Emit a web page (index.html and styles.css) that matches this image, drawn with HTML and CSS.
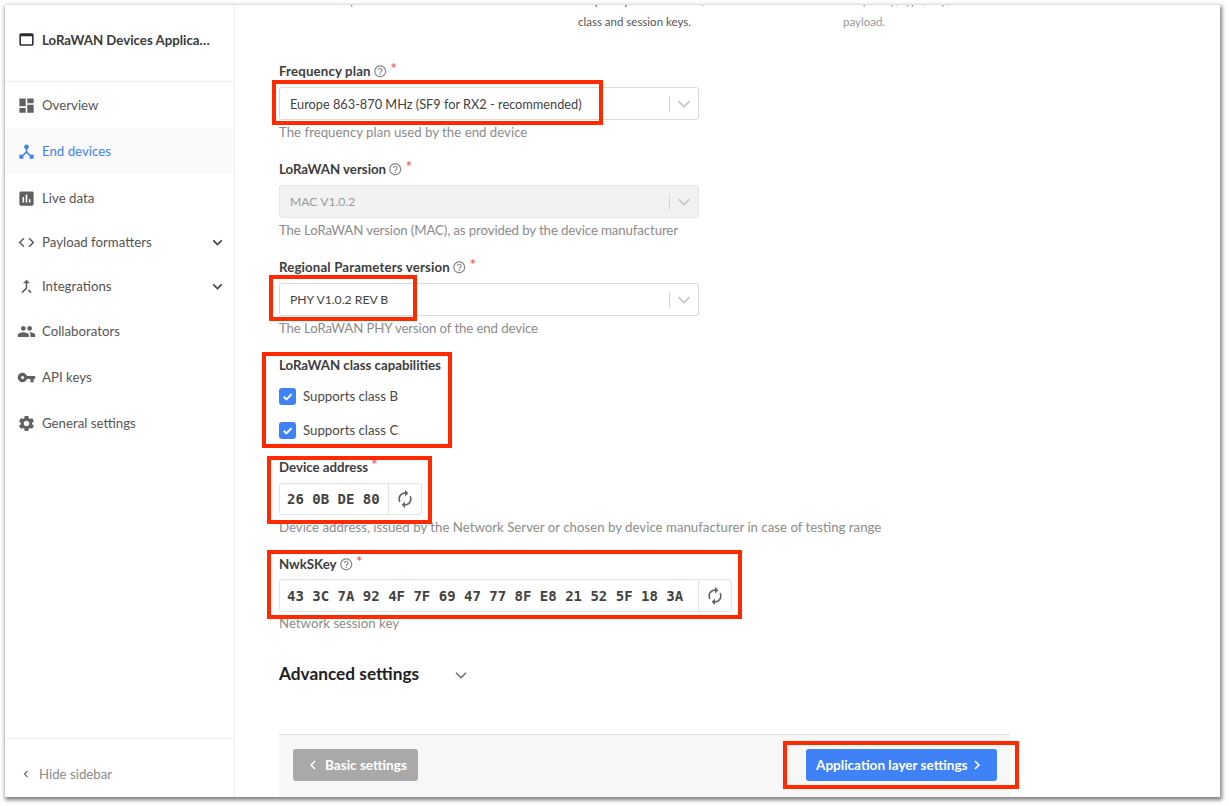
FILE: index.html
```html
<!DOCTYPE html>
<html lang="en">
<head>
<meta charset="utf-8">
<title>End devices</title>
<link rel="stylesheet" href="styles.css">
</head>
<body>
<svg class="defs" width="0" height="0" aria-hidden="true">
  <symbol id="i-web" viewBox="0 0 24 24"><path d="M19 4H5c-1.11 0-2 .9-2 2v12c0 1.1.89 2 2 2h14c1.1 0 2-.9 2-2V6c0-1.1-.89-2-2-2zm0 14H5V8h14v10z"/></symbol>
  <symbol id="i-dash" viewBox="0 0 24 24"><path d="M3 13h8V3H3v10zm0 8h8v-6H3v6zm10 0h8V11h-8v10zm0-18v6h8V3h-8z"/></symbol>
  <symbol id="i-hub" viewBox="0 0 24 24"><path d="M17 16l-4-4V8.82C14.16 8.4 15 7.3 15 6c0-1.66-1.34-3-3-3S9 4.34 9 6c0 1.3.84 2.4 2 2.82V12l-4 4H3v5h5v-3.05l4-4.2 4 4.2V21h5v-5h-4z"/></symbol>
  <symbol id="i-chart" viewBox="0 0 24 24"><path d="M19 3H5c-1.1 0-2 .9-2 2v14c0 1.1.9 2 2 2h14c1.1 0 2-.9 2-2V5c0-1.1-.9-2-2-2zM9 17H7v-7h2v7zm4 0h-2V7h2v10zm4 0h-2v-4h2v4z"/></symbol>
  <symbol id="i-code" viewBox="0 0 24 24"><path d="M9.4 16.6L4.8 12l4.6-4.6L8 6l-6 6 6 6 1.4-1.4zm5.2 0l4.6-4.6-4.6-4.6L16 6l6 6-6 6-1.4-1.4z"/></symbol>
  <symbol id="i-merge" viewBox="0 0 24 24"><path d="M17 20.41L18.41 19 15 15.59 13.59 17 17 20.41zM7.5 8H11v5.59L5.59 19 7 20.41l6-6V8h3.5L12 3.5 7.5 8z"/></symbol>
  <symbol id="i-people" viewBox="0 0 24 24"><path d="M16 11c1.66 0 2.99-1.34 2.99-3S17.66 5 16 5c-1.66 0-3 1.34-3 3s1.34 3 3 3zm-8 0c1.66 0 2.99-1.34 2.99-3S9.66 5 8 5C6.34 5 5 6.34 5 8s1.34 3 3 3zm0 2c-2.33 0-7 1.17-7 3.5V19h14v-2.5c0-2.33-4.67-3.5-7-3.5zm8 0c-.29 0-.62.02-.97.05 1.16.84 1.97 1.97 1.97 3.45V19h6v-2.5c0-2.33-4.67-3.5-7-3.5z"/></symbol>
  <symbol id="i-key" viewBox="0 0 24 24"><path d="M12.65 10C11.83 7.67 9.61 6 7 6c-3.31 0-6 2.69-6 6s2.69 6 6 6c2.61 0 4.83-1.67 5.65-4H17v4h4v-4h2v-4H12.65zM7 14c-1.1 0-2-.9-2-2s.9-2 2-2 2 .9 2 2-.9 2-2 2z"/></symbol>
  <symbol id="i-gear" viewBox="0 0 24 24"><path d="M19.14 12.94c.04-.3.06-.61.06-.94 0-.32-.02-.64-.07-.94l2.03-1.58c.18-.14.23-.41.12-.61l-1.92-3.32c-.12-.22-.37-.29-.59-.22l-2.39.96c-.5-.38-1.03-.7-1.62-.94l-.36-2.54c-.04-.24-.24-.41-.48-.41h-3.84c-.24 0-.43.17-.47.41l-.36 2.54c-.59.24-1.13.57-1.62.94l-2.39-.96c-.22-.08-.47 0-.59.22L2.74 8.87c-.12.21-.08.47.12.61l2.03 1.58c-.05.3-.09.63-.09.94s.02.64.07.94l-2.03 1.58c-.18.14-.23.41-.12.61l1.92 3.32c.12.22.37.29.59.22l2.39-.96c.5.38 1.03.7 1.62.94l.36 2.54c.05.24.24.41.48.41h3.84c.24 0 .44-.17.47-.41l.36-2.54c.59-.24 1.13-.56 1.62-.94l2.39.96c.22.08.47 0 .59-.22l1.92-3.32c.12-.22.07-.47-.12-.61l-2.01-1.58zM12 15.6c-1.98 0-3.6-1.62-3.6-3.6s1.62-3.6 3.6-3.6 3.6 1.62 3.6 3.6-1.62 3.6-3.6 3.6z"/></symbol>
  <symbol id="i-help" viewBox="0 0 24 24"><path d="M11 18h2v-2h-2v2zm1-16C6.48 2 2 6.48 2 12s4.48 10 10 10 10-4.48 10-10S17.52 2 12 2zm0 18c-4.41 0-8-3.59-8-8s3.59-8 8-8 8 3.59 8 8-3.59 8-8 8zm0-14c-2.21 0-4 1.79-4 4h2c0-1.1.9-2 2-2s2 .9 2 2c0 2-3 1.75-3 5h2c0-2.25 3-2.5 3-5 0-2.21-1.79-4-4-4z"/></symbol>
  <symbol id="i-renew" viewBox="0 0 24 24"><path d="M12 6v3l4-4-4-4v3c-4.42 0-8 3.58-8 8 0 1.57.46 3.03 1.24 4.26L6.7 14.8c-.45-.83-.7-1.79-.7-2.8 0-3.31 2.69-6 6-6zm6.76 1.74L17.3 9.2c.44.84.7 1.79.7 2.8 0 3.31-2.69 6-6 6v-3l-4 4 4 4v-3c4.42 0 8-3.58 8-8 0-1.57-.46-3.03-1.24-4.26z"/></symbol>
  <symbol id="i-down" viewBox="0 0 24 24"><path d="M7.41 8.59L12 13.17l4.59-4.58L18 10l-6 6-6-6z"/></symbol>
  <symbol id="i-down-thin" viewBox="0 0 24 24"><path d="M6.5 9.5L12 15l5.5-5.5" fill="none" stroke="currentColor" stroke-width="1.5"/></symbol>
  <symbol id="i-left" viewBox="0 0 24 24"><path d="M15.41 7.41L14 6l-6 6 6 6 1.41-1.41L10.83 12z"/></symbol>
  <symbol id="i-right" viewBox="0 0 24 24"><path d="M8.59 16.59L10 18l6-6-6-6-1.41 1.41L13.17 12z"/></symbol>
  <symbol id="i-check" viewBox="0 0 24 24"><path d="M5 12.5l5 5L19.5 7.5" fill="none" stroke="currentColor" stroke-width="3.4"/></symbol>
</svg>

<div class="window">
  <aside class="sidebar">
    <div class="app-head">
      <svg class="ico ico-head"><use href="#i-web"/></svg>
      <span class="app-name">LoRaWAN Devices Applica…</span>
    </div>
    <nav class="nav">
      <a class="nav-item"><svg class="ico"><use href="#i-dash"/></svg>Overview</a>
      <a class="nav-item is-active"><svg class="ico"><use href="#i-hub"/></svg>End devices</a>
      <a class="nav-item nav-live"><svg class="ico"><use href="#i-chart"/></svg>Live data</a>
      <a class="nav-item nav-sub"><svg class="ico"><use href="#i-code"/></svg>Payload formatters<svg class="ico nav-caret"><use href="#i-down"/></svg></a>
      <a class="nav-item nav-sub"><svg class="ico"><use href="#i-merge"/></svg>Integrations<svg class="ico nav-caret"><use href="#i-down"/></svg></a>
      <a class="nav-item"><svg class="ico"><use href="#i-people"/></svg>Collaborators</a>
      <a class="nav-item"><svg class="ico"><use href="#i-key"/></svg>API keys</a>
      <a class="nav-item"><svg class="ico"><use href="#i-gear"/></svg>General settings</a>
    </nav>
    <div class="side-foot"><svg class="ico ico-small"><use href="#i-left"/></svg>Hide sidebar</div>
  </aside>

  <main class="main">
    <div class="intro">
      <p class="intro-col">Uses pre-set</p>
      <p class="intro-col">Requires personalization, with<br>class and session keys.</p>
      <p class="intro-col intro-muted">Frequency, type, key, and<br>payload.</p>
    </div>

    <form class="form">
      <div class="field">
        <div class="label label-wide">Frequency plan<svg class="ico help"><use href="#i-help"/></svg><span class="req">*</span></div>
        <div class="select"><span class="select-value">Europe 863-870 MHz (SF9 for RX2 - recommended)</span><span class="select-sep"></span><svg class="ico select-caret"><use href="#i-down"/></svg></div>
        <div class="hint">The frequency plan used by the end device</div>
      </div>
      <div class="field">
        <div class="label">LoRaWAN version<svg class="ico help"><use href="#i-help"/></svg><span class="req">*</span></div>
        <div class="select is-disabled"><span class="select-value select-caps">MAC V1.0.2</span><span class="select-sep"></span><svg class="ico select-caret"><use href="#i-down"/></svg></div>
        <div class="hint hint-tight">The LoRaWAN version (MAC), as provided by the device manufacturer</div>
      </div>
      <div class="field">
        <div class="label label-wide">Regional Parameters version<svg class="ico help"><use href="#i-help"/></svg><span class="req">*</span></div>
        <div class="select"><span class="select-value select-caps">PHY V1.0.2 REV B</span><span class="select-sep"></span><svg class="ico select-caret"><use href="#i-down"/></svg></div>
        <div class="hint hint-tight">The LoRaWAN PHY version of the end device</div>
      </div>
      <div class="field-checks">
        <div class="label">LoRaWAN class capabilities</div>
        <div class="checks">
          <div class="check"><span class="box"><svg class="ico"><use href="#i-check"/></svg></span>Supports class B</div>
          <div class="check"><span class="box"><svg class="ico"><use href="#i-check"/></svg></span>Supports class C</div>
        </div>
      </div>
      <div class="field">
        <div class="label">Device address<span class="req">*</span></div>
        <div class="bytes bytes-short"><span class="bytes-value">26 0B DE 80</span><span class="bytes-btn"><svg class="ico"><use href="#i-renew"/></svg></span></div>
        <div class="hint">Device address, issued by the Network Server or chosen by device manufacturer in case of testing range</div>
      </div>
      <div class="field field-key">
        <div class="label">NwkSKey<svg class="ico help"><use href="#i-help"/></svg><span class="req">*</span></div>
        <div class="bytes bytes-long"><span class="bytes-value">43 3C 7A 92 4F 7F 69 47 77 8F E8 21 52 5F 18 3A</span><span class="bytes-btn"><svg class="ico"><use href="#i-renew"/></svg></span></div>
        <div class="hint">Network session key</div>
      </div>
      <div class="advanced"><span class="advanced-title">Advanced settings</span><svg class="ico advanced-caret"><use href="#i-down-thin"/></svg></div>
      <div class="actions">
        <button type="button" class="btn btn-muted"><svg class="ico"><use href="#i-left"/></svg>Basic settings</button>
        <button type="button" class="btn btn-primary">Application layer settings<svg class="ico"><use href="#i-right"/></svg></button>
      </div>
    </form>
  </main>

  <div class="mark mark-1"></div>
  <div class="mark mark-2"></div>
  <div class="mark mark-3"></div>
  <div class="mark mark-4"></div>
  <div class="mark mark-5"></div>
  <div class="mark mark-6"></div>
</div>
</body>
</html>
```

FILE: styles.css
```css
* { box-sizing: border-box; }
html, body { margin: 0; padding: 0; height: 100%; overflow: hidden; background: #fff; }
body { font-family: "Lato", "Noto Sans", sans-serif; font-size: 13.25px; color: #424242; }
.defs { position: absolute; }
.ico { display: block; width: 16px; height: 16px; fill: currentColor; flex: none; }

.window {
  position: relative;
  display: flex;
  width: 1215px;
  height: 792px;
  margin: 5px 0 0 5px;
  background: #fff;
  overflow: hidden;
}
body::before {
  content: "";
  position: absolute;
  left: 5px; top: 5px;
  width: 1215px; height: 792px;
  box-shadow: 1px 2px 4px 1px rgba(0,0,0,.5);
}

.sidebar {
  width: 230px;
  flex: none;
  display: flex;
  flex-direction: column;
  border-right: 1px solid #eee;
}
.app-head {
  height: 77px;
  flex: none;
  display: flex;
  align-items: center;
  gap: 6px;
  padding: 0 12px 7px;
  border-bottom: 1px solid #eee;
}
.ico-head { color: #2e2e2e; width: 19px; height: 19px; }
.app-name { font-weight: 700; color: #3a3a3a; white-space: nowrap; }
.nav { flex: 1; }
.nav-item {
  display: flex;
  align-items: center;
  gap: 6px;
  height: 46px;
  padding: 0 7px 0 12px;
  color: #555;
}
.nav-item .ico { width: 19px; height: 19px; color: #616161; }
.nav-live { padding-top: 2px; }
.nav-sub { height: 44px; }
.nav-item .nav-caret { margin-left: auto; color: #424242; }
.is-active { background: #fafafa; color: #3f82f7; }
.nav-item.is-active .ico { color: #3f82f7; }
.side-foot {
  height: 59px;
  flex: none;
  display: flex;
  align-items: center;
  gap: 6px;
  padding: 12px 0 0 14px;
  border-top: 1px solid #eee;
  color: #8a8a8a;
}
.ico-small { width: 14px; height: 14px; color: #666; }

.main { flex: 1; min-width: 0; padding-left: 44px; }
.intro {
  display: grid;
  grid-template-columns: 299px 265px 200px;
  height: 56px;
  margin-top: -15px;
  margin-bottom: 15px;
  color: #555;
  font-size: 11.5px;
  line-height: 21px;
}
.intro-col { margin: 0; }
.intro-col:first-child { padding-left: 44px; color: #999; }
.intro-muted { color: #999; }

.form { width: 731px; }
.field { margin-bottom: 17px; }
.label {
  display: flex;
  align-items: center;
  height: 20px;
  margin-bottom: 6px;
  font-weight: 700;
  color: #3d3d3d;
}
.label-wide { letter-spacing: .15px; }
.help { width: 14.5px; height: 14.5px; margin-left: 2px; color: #8a8a8a; }
.req { color: #f24a4a; margin: -7px 0 0 3px; font-weight: 400; font-size: 16px; }
.select {
  display: flex;
  align-items: center;
  width: 420px;
  height: 33px;
  padding: 0 2px 0 10px;
  border: 1px solid #d9d9d9;
  border-radius: 3px;
  background: #fff;
}
.select-value { flex: 1; color: #424242; font-size: 12.75px; }
.select-caps { font-size: 12.2px; }
.select-sep { width: 1px; height: 16px; background: #d6d6d6; }
.select-caret { width: 24px; height: 24px; margin-left: 2px; color: #ccc; }
.is-disabled { background: #f2f2f2; border-color: #e6e6e6; }
.is-disabled .select-value { color: #9a9a9a; }
.hint { height: 20px; margin-top: 2px; line-height: 20px; color: #8c8c8c; white-space: nowrap; }
.hint-tight { letter-spacing: -.12px; }

.field-checks { margin-bottom: 10px; }
.field-checks .label { margin-bottom: 4px; }
.check { display: flex; align-items: center; gap: 7px; height: 34px; color: #4a4a4a; }
.box {
  display: flex;
  align-items: center;
  justify-content: center;
  width: 17px;
  height: 17px;
  border-radius: 3px;
  background: #3f82f7;
  color: #fff;
}
.box .ico { width: 13px; height: 13px; }

.bytes {
  display: flex;
  height: 32px;
  border: 1px solid #e3e3e3;
  border-radius: 3px;
}
.bytes-short { width: 143px; }
.bytes-long { width: 453px; height: 33px; }
.bytes-value {
  flex: 1;
  display: flex;
  align-items: center;
  padding-left: 7px;
  font-family: "DejaVu Sans Mono", monospace;
  font-size: 14px;
  font-weight: 700;
  color: #424242;
  white-space: pre;
}
.bytes-btn {
  width: 33px;
  flex: none;
  display: flex;
  align-items: center;
  justify-content: center;
  border-left: 1px solid #e3e3e3;
  color: #666;
}
.bytes-btn .ico { width: 20px; height: 20px; }
.field-key { margin-bottom: 0; }
.field-key .label { margin-bottom: 5px; }
.field-key .hint { margin-top: 1px; }

.advanced {
  display: flex;
  align-items: center;
  height: 24px;
  margin-top: 28px;
}
.advanced-title { font-size: 17.25px; font-weight: 700; color: #212121; }
.advanced-caret { width: 22px; height: 22px; margin: 4px 0 0 31px; color: #666; }

.actions {
  display: flex;
  justify-content: space-between;
  align-items: flex-start;
  height: 70px;
  margin-top: 49px;
  padding: 14px 13px 0 14px;
  background: #f7f7f7;
  border-top: 1px solid #e3e3e3;
}
.btn {
  display: flex;
  align-items: center;
  height: 32px;
  border: 0;
  border-radius: 3px;
  font: 700 13.55px "Lato", "Noto Sans", sans-serif;
  color: #fff;
}
.btn .ico { width: 18px; height: 18px; }
.btn-muted { width: 125px; padding-left: 11px; gap: 3px; background: #a9a9a9; }
.btn-primary { width: 191px; padding-left: 10px; gap: 0; background: #3f82f7; }

.mark { position: absolute; border: 4px solid #ff2a00; pointer-events: none; }
.mark-1 { left: 267px; top: 75px; width: 331px; height: 45px; }
.mark-2 { left: 264px; top: 270px; width: 148px; height: 46px; }
.mark-3 { left: 257px; top: 347px; width: 190px; height: 96px; }
.mark-4 { left: 262px; top: 451px; width: 165px; height: 68px; }
.mark-5 { left: 262px; top: 545px; width: 475px; height: 69px; }
.mark-6 { left: 778px; top: 736px; width: 236px; height: 48px; }
```
